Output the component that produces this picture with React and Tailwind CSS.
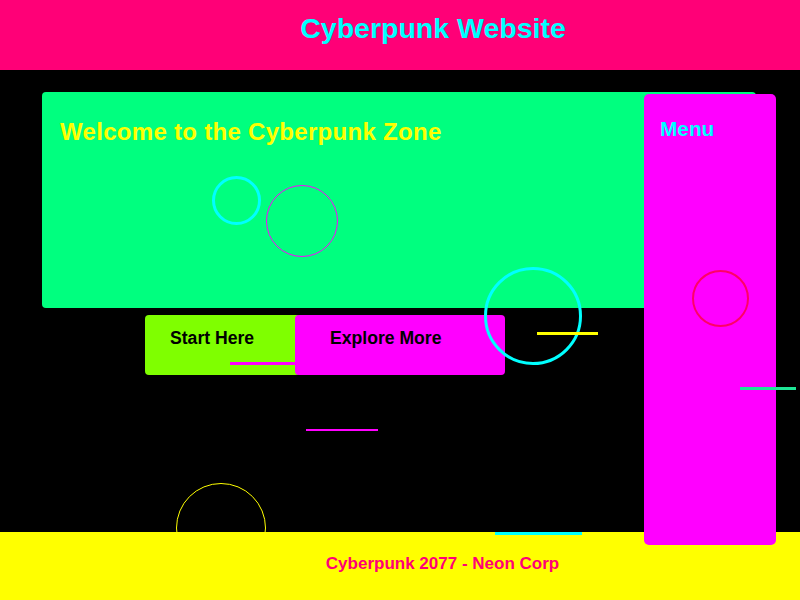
export default function App() {
  return (
    <div className="relative w-[800px] h-[600px] bg-black overflow-hidden font-[family-name:'Liberation_Sans',Arial,sans-serif] font-bold">
      <header className="relative h-[70px] bg-[#ff0077] pt-[12px] pl-[66px] text-center">
        <h1 className="text-[28.5px] leading-[33px] text-[#00ffff]">Cyberpunk Website</h1>
      </header>

      <main className="relative h-[462px] pt-[22px]">
        <section className="ml-[42px] w-[714px] h-[216px] rounded-[4px] bg-[#00ff7f] pt-[26px] pl-[18px]">
          <h2 className="text-[24px] leading-[28px] tracking-[0.3px] text-[#ffff00]">Welcome to the Cyberpunk Zone</h2>
        </section>

        <div className="flex mt-[7px] ml-[145px]">
          <button className="w-[155px] h-[60px] rounded-[4px] bg-[#7fff00] text-black text-[17.6px] leading-[20px] text-left pl-[25px] pb-[14px]">
            Start Here
          </button>
          <button className="-ml-[5px] w-[210px] h-[60px] rounded-[4px] bg-[#ff00ff] text-black text-[17.6px] leading-[20px] text-left pl-[35px] pb-[14px]">
            Explore More
          </button>
        </div>
      </main>

      {/* decoration behind footer */}
      <div className="absolute left-[176px] top-[483px] w-[90px] h-[90px] rounded-full border-[1.5px] border-[#ffff00]" />

      <footer className="relative h-[68px] bg-[#ffff00] pt-[22px] pl-[85px] text-center">
        <p className="text-[17px] leading-[20px] text-[#ff0077]">Cyberpunk 2077 - Neon Corp</p>
      </footer>

      <aside className="absolute left-[644px] top-[94px] w-[132px] h-[451px] rounded-[5px] bg-[#ff00ff] pt-[23px] pl-[16px]">
        <h3 className="text-[20.8px] leading-[24px] text-[#00ffff]">Menu</h3>
      </aside>

      {/* neon decorations */}
      <div className="absolute left-[212px] top-[176px] w-[49px] h-[49px] rounded-full border-[3px] border-[#00ffff]" />
      <div className="absolute left-[266px] top-[185px] w-[72px] h-[72px] rounded-full border border-[#ff00ff]" />
      <div className="absolute left-[484px] top-[267px] w-[98px] h-[98px] rounded-full border-[3px] border-[#00ffff]" />
      <div className="absolute left-[537px] top-[332px] w-[61px] h-[3px] bg-[#ffff00]" />
      <div className="absolute left-[230px] top-[362px] w-[66px] h-[3px] bg-[#ff00ff]" />
      <div className="absolute left-[306px] top-[429px] w-[72px] h-[2px] bg-[#ff00ff]" />
      <div className="absolute left-[692px] top-[270px] w-[57px] h-[57px] rounded-full border-[2px] border-[#ff0066]" />
      <div className="absolute left-[740px] top-[387px] w-[56px] h-[3px] bg-[#1ee696]" />
      <div className="absolute left-[495px] top-[532px] w-[87px] h-[3px] bg-[#00ffff]" />
    </div>
  );
}
